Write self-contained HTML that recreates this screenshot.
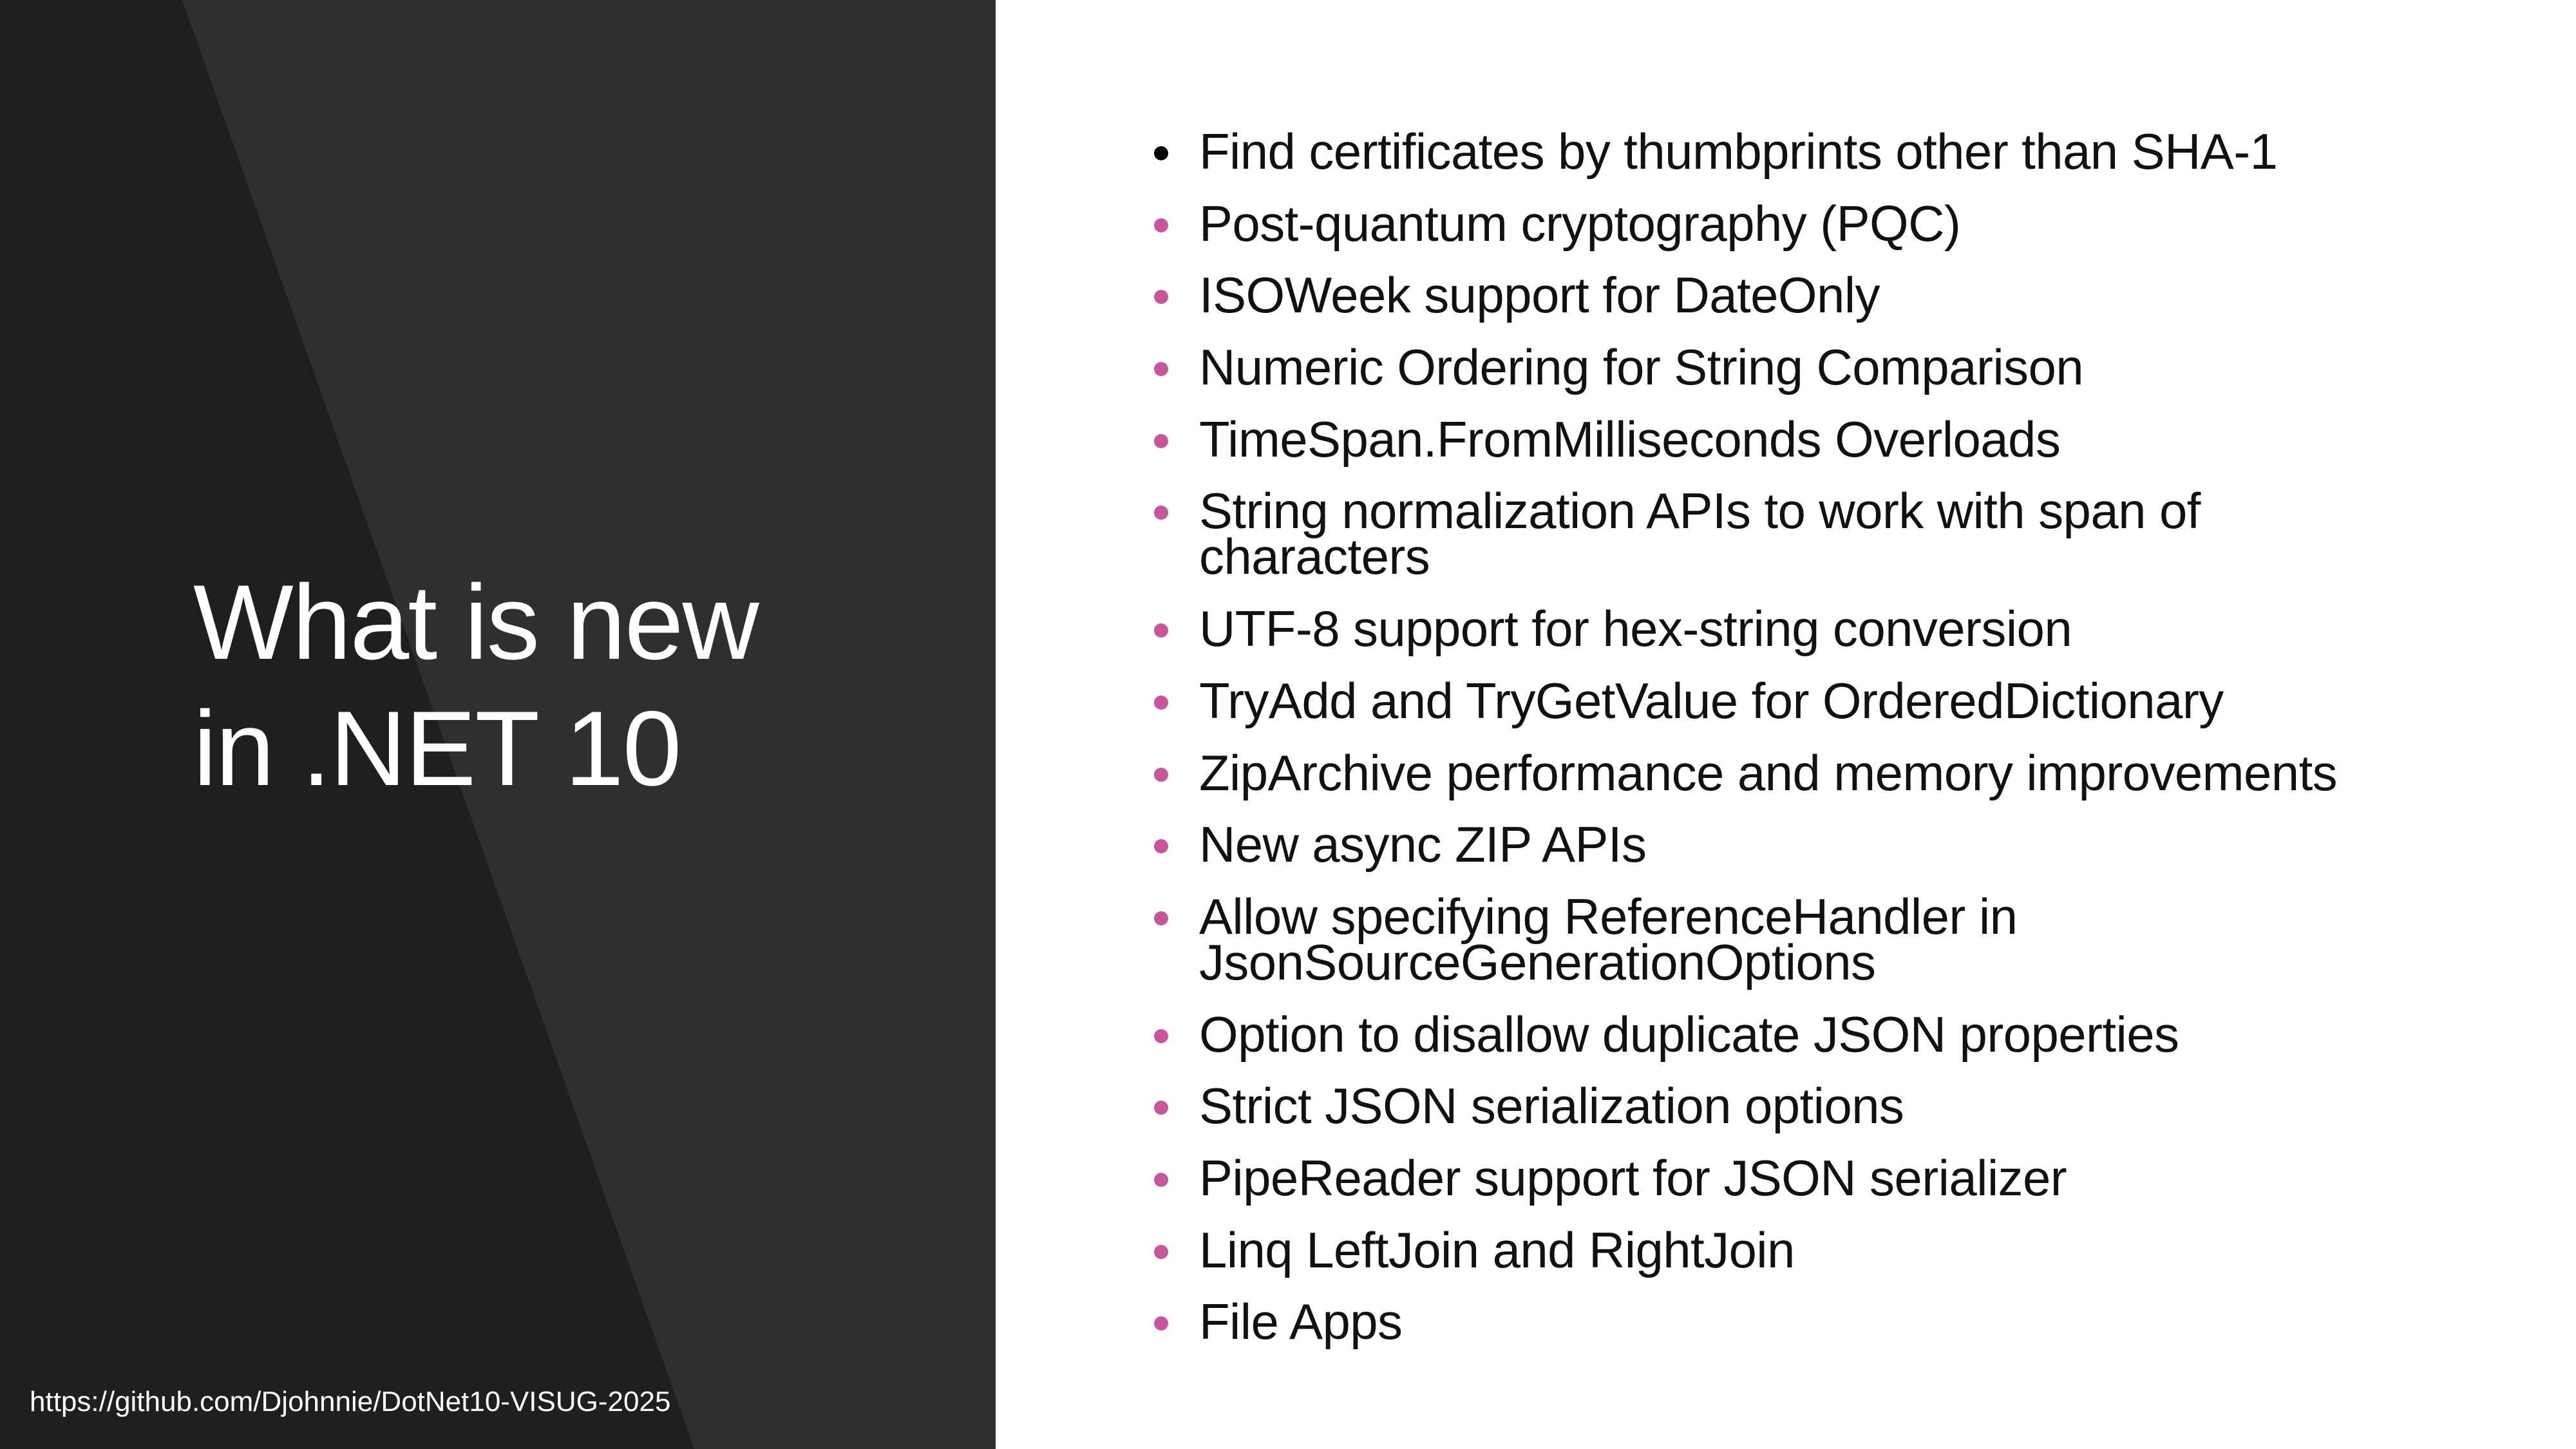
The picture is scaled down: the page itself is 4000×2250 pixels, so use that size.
<!DOCTYPE html>
<html><head><meta charset="utf-8"><style>
html,body{margin:0;padding:0}
body{width:4000px;height:2250px;position:relative;overflow:hidden;background:#fff;font-family:"Liberation Sans",sans-serif}
#left{position:absolute;left:0;top:0;width:1546px;height:2250px;background:#2f2f2f;overflow:hidden}
#title{position:absolute;left:300px;top:868px;color:#fff;font-size:165px;line-height:196px;letter-spacing:-2px}
#url{position:absolute;left:46px;top:2152px;color:#fff;font-size:44px;line-height:50px}
ul{position:absolute;left:1862px;top:200px;margin:0;padding:0;list-style:none;color:#111}
li{position:relative;font-size:78px;line-height:71px;margin-bottom:40.7px;letter-spacing:-0.6px;white-space:nowrap}
li::before{content:"";position:absolute;left:-70px;top:27px;width:22px;height:22px;border-radius:50%;background:#c9559d}
li.first::before{background:#000}
</style></head><body>
<div id="left">
<svg width="1546" height="2250" style="position:absolute;left:0;top:0"><polygon points="0,0 283,0 1078,2250 0,2250" fill="#1f1f1f"/></svg>
<div id="title">What is new<br>in .NET 10</div>
<div id="url">https://github.com/Djohnnie/DotNet10-VISUG-2025</div>
</div>
<ul>
<li class="first">Find certificates by thumbprints other than SHA-1</li>
<li>Post-quantum cryptography (PQC)</li>
<li>ISOWeek support for DateOnly</li>
<li>Numeric Ordering for String Comparison</li>
<li>TimeSpan.FromMilliseconds Overloads</li>
<li>String normalization APIs to work with span of<br>characters</li>
<li>UTF-8 support for hex-string conversion</li>
<li>TryAdd and TryGetValue for OrderedDictionary</li>
<li>ZipArchive performance and memory improvements</li>
<li>New async ZIP APIs</li>
<li>Allow specifying ReferenceHandler in<br>JsonSourceGenerationOptions</li>
<li>Option to disallow duplicate JSON properties</li>
<li>Strict JSON serialization options</li>
<li>PipeReader support for JSON serializer</li>
<li>Linq LeftJoin and RightJoin</li>
<li>File Apps</li>
</ul>
</body></html>
